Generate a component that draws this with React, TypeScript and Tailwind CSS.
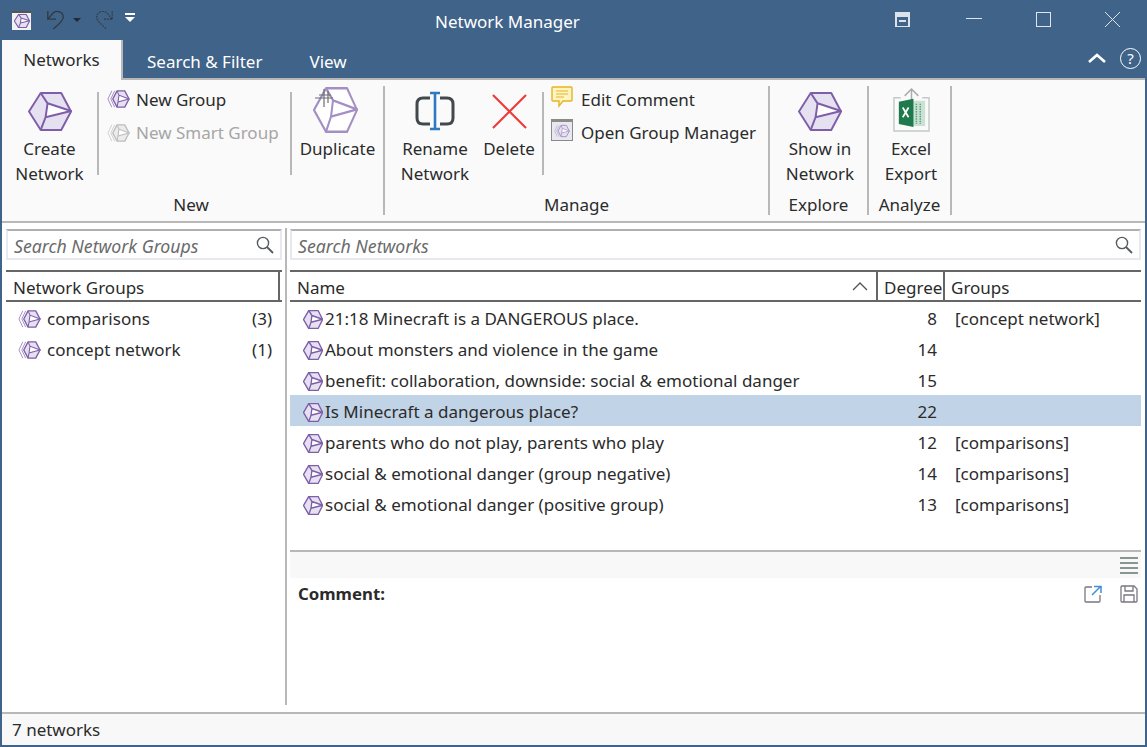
import React from "react";

const rows = [
  { name: "21:18 Minecraft is a DANGEROUS place.", degree: 8, groups: "[concept network]" },
  { name: "About monsters and violence in the game", degree: 14, groups: "" },
  { name: "benefit: collaboration, downside: social & emotional danger", degree: 15, groups: "" },
  { name: "Is Minecraft a dangerous place?", degree: 22, groups: "", selected: true },
  { name: "parents who do not play, parents who play", degree: 12, groups: "[comparisons]" },
  { name: "social & emotional danger (group negative)", degree: 14, groups: "[comparisons]" },
  { name: "social & emotional danger (positive group)", degree: 13, groups: "[comparisons]" },
];

function Hex({ className, fill = "#e6e1f0", stroke = "#7e5ea8", sw = 2 }: { className?: string; fill?: string; stroke?: string; sw?: number }) {
  return (
    <svg viewBox="-1 0 45 38" preserveAspectRatio="none" className={className} fill="none">
      <path d="M0 19 L12 1 H33 L43 19 L33 37 H12 Z" fill={fill} stroke={stroke} strokeWidth={sw} strokeLinejoin="round" />
      <path d="M19 11 L43 18.5 L17 24.5 Z" fill="#fff" />
      <path d="M12 1 L19 11 L43 18.5 L17 24.5 L12 37 M19 11 L17 24.5" stroke={stroke} strokeWidth={sw} strokeLinejoin="round" />
    </svg>
  );
}

function GroupHex({ className, color = "#7e5ea8", fill = "#e6e1f0" }: { className?: string; color?: string; fill?: string }) {
  return (
    <svg viewBox="0 0 24 20" className={className} fill="none">
      <path d="M5 1.5 L1 10 L5 18.5" stroke={color} strokeWidth="1" opacity="0.7" />
      <path d="M8 1.5 L4 10 L8 18.5" stroke={color} strokeWidth="1" opacity="0.7" />
      <path d="M6 10 L10.5 1.5 H18.5 L23 10 L18.5 18.5 H10.5 Z" fill={fill} stroke={color} strokeWidth="1.4" strokeLinejoin="round" />
      <path d="M12.5 6 L23 10 L11.5 13 Z" fill="#fff" />
      <path d="M10.5 1.5 L12.5 6 L23 10 L11.5 13 L10.5 18.5 M12.5 6 L11.5 13" stroke={color} strokeWidth="1.1" />
    </svg>
  );
}

function SearchIcon({ className }: { className?: string }) {
  return (
    <svg viewBox="0 0 18 18" className={className} fill="none" stroke="#555b60" strokeWidth="1.4">
      <circle cx="7" cy="7" r="5.6" />
      <path d="M11 11 L17 17" strokeWidth="1.8" />
    </svg>
  );
}

function Separator({ full = false }: { full?: boolean }) {
  return <div className={full ? "w-[2px] h-[129px] mt-[6px] bg-[#b8b8b8] shrink-0" : "w-[2px] h-[83px] mt-[12px] bg-[#b8b8b8] shrink-0"} />;
}

function BigButton({ icon, lines, width }: { icon: React.ReactNode; lines: string[]; width: string }) {
  return (
    <div className={`${width} flex flex-col items-center shrink-0`}>
      <div className="h-[56px] w-full flex items-center justify-center">{icon}</div>
      {lines.map((l) => (
        <div key={l} className="h-[25px] leading-[25px] text-center whitespace-nowrap">{l}</div>
      ))}
    </div>
  );
}

function GroupLabel({ children, className }: { children: React.ReactNode; className?: string }) {
  return <div className={`text-center leading-[25px] h-[25px] ${className ?? ""}`}>{children}</div>;
}

export default function App() {
  return (
    <div className="w-[1147px] h-[747px] overflow-hidden flex flex-col bg-white text-[17px] text-[#2b2b2b] border-x-2 border-b-2 border-[#3f6389] font-['Noto_Sans','Open_Sans',sans-serif]">
      {/* Title bar */}
      <div className="h-[40px] bg-[#3f6389] flex items-center relative shrink-0">
        <div className="ml-[10px] w-[19px] h-[19px] bg-[#f2f2f2] border-t-2 border-[#555] flex items-center justify-center">
          <Hex className="w-[16px] h-[14px]" sw={3} />
        </div>
        <svg viewBox="0 0 22 22" className="w-[20px] h-[20px] ml-[15px]" fill="none" stroke="#33383c" strokeWidth="1.4">
          <path d="M2 1 V10 H11 M2 10 L8 3 C12 0 19 2 19 8 C19 12 14 16 8 21" />
        </svg>
        <div className="ml-[7px] w-0 h-0 border-x-[4px] border-x-transparent border-t-[4px] border-t-[#26292c]" />
        <svg viewBox="0 0 22 22" className="w-[20px] h-[20px] ml-[13px]" fill="none" stroke="#33383c" strokeWidth="1.2" strokeDasharray="2 1.2">
          <path d="M20 1 V10 H11 M20 10 L14 3 C10 0 3 2 3 8 C3 12 8 16 14 21" />
        </svg>
        <div className="ml-[11px] -mt-[6px] flex flex-col items-center gap-[2px]">
          <div className="w-[10px] h-[2px] bg-white" />
          <div className="w-0 h-0 border-x-[5px] border-x-transparent border-t-[5px] border-t-white" />
        </div>
        <div className="absolute left-[433px] top-[9px] text-white leading-[25px]">Network Manager</div>
        <div className="absolute left-[893px] top-[12px] w-[15px] h-[15px] bg-[#dbe2ea] flex items-center justify-center">
          <div className="w-[11px] h-[9px] bg-[#3f6389] mt-[3px] flex items-center justify-center"><div className="w-[7px] h-[2px] bg-[#dbe2ea]" /></div>
        </div>
        <div className="absolute left-[964px] top-[18px] w-[16px] h-[1px] bg-[#dfe5ec]" />
        <div className="absolute left-[1034px] top-[12px] w-[15px] h-[15px] border border-[#dfe5ec]" />
        <svg viewBox="0 0 15 15" className="absolute left-[1103px] top-[12px] w-[15px] h-[15px]" stroke="#dfe5ec" strokeWidth="1">
          <path d="M0 0 L15 15 M15 0 L0 15" />
        </svg>
      </div>

      {/* Tabs */}
      <div className="h-[38px] bg-[#3f6389] flex relative shrink-0 text-white">
        <div className="relative z-10 w-[121px] h-[40px] pb-[1px] bg-[#fafafa] border-r-2 border-[#b8b8b8] text-[#2b2b2b] flex items-center justify-center">Networks</div>
        <div className="ml-[24px] pt-[5px] flex items-center">Search &amp; Filter</div>
        <div className="ml-[47px] pt-[5px] flex items-center">View</div>
        <svg viewBox="0 0 18 10" className="absolute left-[1086px] top-[13px] w-[18px] h-[10px]" fill="none" stroke="#fff" strokeWidth="2.6">
          <path d="M1 9 L9 2 L17 9" />
        </svg>
        <div className="absolute left-[1118px] top-[8px] w-[21px] h-[21px] rounded-full border border-white flex items-center justify-center text-[15px] leading-none">?</div>
      </div>

      {/* Ribbon */}
      <div className="h-[145px] shrink-0 bg-[#fafafa] border-y-2 border-[#b8b8b8] flex">
        {/* New */}
        <div className="w-[381px] shrink-0 flex flex-col">
          <div className="flex h-[112px]">
            <BigButton width="w-[95px]" lines={["Create", "Network"]} icon={<Hex className="w-[44px] h-[39px] mt-[6px]" />} />
            <Separator />
            <div className="w-[191px] shrink-0 pt-[3px] pl-[8px]">
              <div className="flex items-center h-[33px]">
                <GroupHex className="w-[23px] h-[20px] -mt-[2px]" />
                <span className="ml-[6px]">New Group</span>
              </div>
              <div className="flex items-center h-[33px] text-[#a6a6a6]">
                <GroupHex className="w-[23px] h-[20px]" color="#bdbdbd" fill="#ececec" />
                <span className="ml-[6px]">New Smart Group</span>
              </div>
            </div>
            <Separator />
            <BigButton
              width="w-[91px]"
              lines={["Duplicate"]}
              icon={
                <div className="relative -ml-[5px] mt-[3px]">
                  <Hex className="w-[45px] h-[46px] block" fill="#fff" stroke="#a48fc4" />
                  <svg viewBox="0 0 20 20" className="absolute left-[2px] top-[2px] w-[20px] h-[20px]" stroke="#6e6e6e" strokeWidth="1.2">
                    <path d="M9 0 V18 M0 9 H18 M4 6 H16 M13 2 V14" />
                  </svg>
                </div>
              }
            />
          </div>
          <GroupLabel className="pr-[3px]">New</GroupLabel>
        </div>
        <Separator full />
        {/* Manage */}
        <div className="w-[383px] shrink-0 flex flex-col">
          <div className="flex h-[112px]">
            <BigButton
              width="w-[100px]"
              lines={["Rename", "Network"]}
              icon={
                <svg viewBox="0 0 40 40" className="w-[40px] h-[40px] mt-[6px]" fill="none">
                  <path d="M15 7 H8 Q2 7 2 13 V27 Q2 33 8 33 H15 M25 7 H32 Q38 7 38 13 V27 Q38 33 32 33 H25" stroke="#42494d" strokeWidth="3" />
                  <path d="M20 1 V39 M15 2 H25 M15 38 H25" stroke="#2f7abf" strokeWidth="2.6" />
                </svg>
              }
            />
            <BigButton
              width="w-[48px] mr-[9px]"
              lines={["Delete"]}
              icon={
                <svg viewBox="0 0 36 36" className="w-[35px] h-[35px] mt-[6px]" stroke="#ee3b3b" strokeWidth="2.2">
                  <path d="M1 1 L35 35 M35 1 L1 35" />
                </svg>
              }
            />
            <Separator />
            <div className="pt-[3px] pl-[7px]">
              <div className="flex items-center h-[33px]">
                <svg viewBox="0 0 22 22" className="w-[22px] h-[22px] -mt-[5px]" fill="#fff4c4" stroke="#e6b422" strokeWidth="1.4">
                  <path d="M2 1 H20 Q21 1 21 2 V14 Q21 15 20 15 H12 L8 20 V15 H2 Q1 15 1 14 V2 Q1 1 2 1 Z" />
                  <path d="M5 5 H17 M5 8 H17 M5 11 H13" strokeWidth="1" />
                </svg>
                <span className="ml-[8px]">Edit Comment</span>
              </div>
              <div className="flex items-center h-[33px]">
                <div className="w-[22px] h-[22px] -mt-[5px] bg-[#e8e8ee] border border-[#8a8a8a] border-t-[3px] flex items-center justify-center">
                  <GroupHex className="w-[16px] h-[14px]" color="#a48fc4" />
                </div>
                <span className="ml-[8px]">Open Group Manager</span>
              </div>
            </div>
          </div>
          <GroupLabel>Manage</GroupLabel>
        </div>
        <Separator full />
        {/* Explore */}
        <div className="w-[97px] shrink-0 flex flex-col">
          <div className="h-[112px] pl-[3px]">
            <BigButton width="w-[94px]" lines={["Show in", "Network"]} icon={<Hex className="w-[44px] h-[39px] mt-[6px]" />} />
          </div>
          <GroupLabel>Explore</GroupLabel>
        </div>
        <Separator full />
        {/* Analyze */}
        <div className="w-[81px] shrink-0 flex flex-col">
          <div className="h-[112px] pl-[3px]">
            <BigButton
              width="w-[78px]"
              lines={["Excel", "Export"]}
              icon={
                <svg viewBox="0 0 38 46" className="w-[37px] h-[45px] mt-[2px]" fill="none">
                  <path d="M8 11 H1 V45 H37 V11 H30" stroke="#c4c8c8" strokeWidth="1.5" />
                  <path d="M19 30 V2 M12 9 L19 2 L26 9" stroke="#a8acac" strokeWidth="1.5" />
                  <rect x="20" y="14" width="13" height="26" fill="#c9e2d3" />
                  <path d="M24 17 V38 M28 17 V38" stroke="#5f9e7c" strokeWidth="1.5" strokeDasharray="1.5 1" />
                  <path d="M6 15 L21 12 V41 L6 38 Z" fill="#1e7a4c" />
                  <path d="M10 21 L16 31 M16 21 L10 31" stroke="#fff" strokeWidth="1.8" />
                </svg>
              }
            />
          </div>
          <GroupLabel>Analyze</GroupLabel>
        </div>
        <Separator full />
      </div>

      {/* Panes */}
      <div className="flex-1 min-h-0 flex">
        {/* Left pane */}
        <div className="w-[283px] shrink-0 pl-[4px] pt-[6px] flex flex-col mb-[7px]">
          <div className="w-[276px] h-[31px] flex items-center border-2 border-[#e6eaf0] border-t-[#aeb0b2] pl-[6px] pr-[6px] bg-white">
            <span className="flex-1 pt-[3px] italic text-[#6b6b6b] text-[17.7px] whitespace-nowrap">Search Network Groups</span>
            <SearchIcon className="w-[18px] h-[18px]" />
          </div>
          <div className="mt-[10px] w-[276px] h-[32px] border-y-2 border-[#666] flex items-center pl-[7px] shrink-0">
            <div className="flex-1 pt-[3px]">Network Groups</div>
            <div className="w-[2px] h-full bg-[#666] mr-[2px]" />
          </div>
          {[["comparisons", "(3)"], ["concept network", "(1)"]].map(([n, c]) => (
            <div key={n} className="w-[276px] h-[31px] pt-[3px] flex items-center pl-[12px] pr-[10px]">
              <GroupHex className="w-[23px] h-[20px]" />
              <span className="ml-[6px] flex-1">{n}</span>
              <span>{c}</span>
            </div>
          ))}
        </div>
        <div className="w-[2px] bg-[#b8b8b8] mt-[5px] mb-[7px] shrink-0" />
        {/* Right pane */}
        <div className="flex-1 min-w-0 pl-[3px] pr-[4px] pt-[6px] flex flex-col">
          <div className="h-[31px] flex items-center border-2 border-[#e6eaf0] border-t-[#aeb0b2] pl-[6px] pr-[6px] shrink-0">
            <span className="flex-1 pt-[3px] italic text-[#6b6b6b] text-[17.7px]">Search Networks</span>
            <SearchIcon className="w-[18px] h-[18px]" />
          </div>
          <div className="mt-[10px] h-[32px] border-y-2 border-[#666] flex items-center shrink-0">
            <div className="w-[588px] shrink-0 pl-[7px] flex items-center justify-between h-full border-r-2 border-[#666] pr-[8px]">
              <span className="pt-[3px]">Name</span>
              <svg viewBox="0 0 16 9" className="w-[16px] h-[9px]" fill="none" stroke="#555" strokeWidth="1.4">
                <path d="M1 8 L8 1 L15 8" />
              </svg>
            </div>
            <div className="w-[67px] shrink-0 pl-[6px] pt-[3px] h-full flex items-center border-r-2 border-[#666] whitespace-nowrap">Degree</div>
            <div className="pl-[6px] pt-[3px]">Groups</div>
          </div>
          {rows.map((r) => (
            <div key={r.name} className={`h-[31px] pt-[3px] flex items-center shrink-0 ${r.selected ? "bg-[#c1d3e6]" : ""}`}>
              <div className="w-[587px] shrink-0 pl-[13px] flex items-center whitespace-nowrap">
                <Hex className="w-[20px] h-[19px]" sw={3} />
                <span className="ml-[2px]">{r.name}</span>
              </div>
              <div className="w-[60px] shrink-0 text-right">{r.degree}</div>
              <div className="pl-[18px]">{r.groups}</div>
            </div>
          ))}
          <div className="mt-[31px] h-[2px] bg-[#b8b8b8] shrink-0" />
          <div className="h-[26px] bg-[#f8f8f8] flex items-center justify-end pr-[3px] shrink-0">
            <div className="w-[18px] flex flex-col gap-[3px]">
              <div className="h-[2px] bg-[#8a9490]" />
              <div className="h-[2px] bg-[#8a9490]" />
              <div className="h-[2px] bg-[#8a9490]" />
              <div className="h-[2px] bg-[#8a9490]" />
            </div>
          </div>
          <div className="h-[31px] flex items-center pl-[8px] pr-[3px] shrink-0">
            <span className="flex-1 font-bold text-[16.8px]">Comment:</span>
            <svg viewBox="0 0 18 18" className="w-[18px] h-[18px]" fill="none">
              <path d="M8 2 H2 Q1 2 1 3 V16 Q1 17 2 17 H15 Q16 17 16 16 V10" stroke="#7b7680" strokeWidth="1.3" />
              <path d="M8 10 L16 2 M10 1.5 H17 V8" stroke="#3f8fd6" strokeWidth="1.5" />
            </svg>
            <svg viewBox="0 0 18 18" className="w-[18px] h-[18px] ml-[18px]" fill="none" stroke="#7b7680" strokeWidth="1.3">
              <path d="M2 1 H14 L17 4 V16 Q17 17 16 17 H2 Q1 17 1 16 V2 Q1 1 2 1 Z" />
              <path d="M5 1 V6 H13 V1 M4 17 V10 H14 V17" />
            </svg>
          </div>
        </div>
      </div>

      {/* Status bar */}
      <div className="h-[33px] shrink-0 bg-[#f8f8f8] border-t-2 border-[#b8b8b8] flex items-center pl-[10px]">7 networks</div>
    </div>
  );
}
